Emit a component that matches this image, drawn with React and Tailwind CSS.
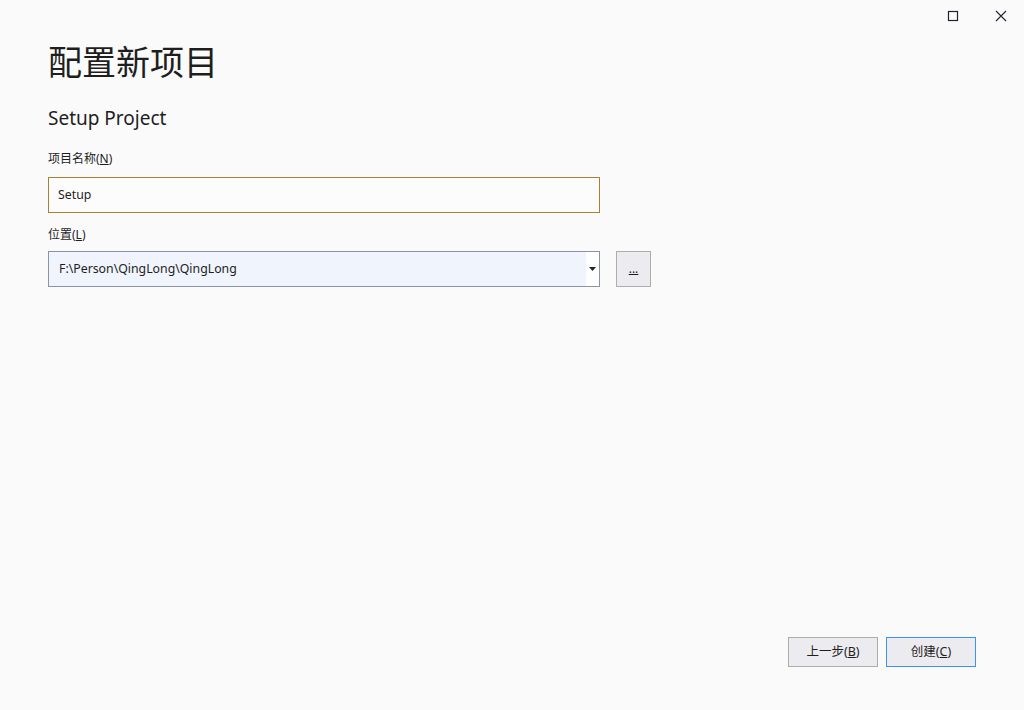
export default function App() {
  const font = { fontFamily: '"Noto Sans", "Noto Sans CJK SC", sans-serif' };
  return (
    <div className="w-[1024px] h-[710px] bg-[#fafafa] text-[#1e1e1e] flex flex-col relative overflow-hidden" style={font}>
      <div className="absolute top-[10px] right-[17px] flex items-center gap-[36px]">
        <svg width="12" height="12" viewBox="0 0 12 12"><rect x="1.5" y="1.5" width="9" height="9" fill="none" stroke="#1e2433" strokeWidth="1.2" /></svg>
        <svg width="12" height="12" viewBox="0 0 12 12"><path d="M1 1 L11 11 M11 1 L1 11" stroke="#1e2433" strokeWidth="1.1" /></svg>
      </div>
      <div className="pl-[48px] pt-[38px] flex flex-col">
        <h1 className="text-[34px] leading-[46px] font-normal" style={{ fontFamily: '"Noto Sans CJK SC", sans-serif' }}>配置新项目</h1>
        <h2 className="text-[19px] leading-[28px] mt-[20px]">Setup Project</h2>
        <label className="text-[12px] leading-[18px] mt-[18px]">项目名称(<span className="underline">N</span>)</label>
        <div className="mt-[9px] w-[552px] h-[36px] border border-[#a88033] bg-[#fcfcfc] flex items-center pl-[9px] text-[12.3px]">Setup</div>
        <label className="text-[12px] leading-[18px] mt-[13px]">位置(<span className="underline">L</span>)</label>
        <div className="mt-[7px] flex items-center gap-[16px]">
          <div className="w-[552px] h-[36px] border border-[#8c93a5] bg-[#f0f4fc] flex items-stretch">
            <div className="flex-1 flex items-center pl-[10px] text-[12.3px]">F:\Person\QingLong\QingLong</div>
            <div className="w-[13px] bg-white flex items-center justify-center">
              <svg width="7" height="5" viewBox="0 0 7 5"><path d="M0 0 H7 L3.5 4 Z" fill="#1e2433" /></svg>
            </div>
          </div>
          <div className="w-[35px] h-[36px] border border-[#adadad] bg-[#ececf0] flex items-center justify-center text-[12px] leading-none">
            <span className="underline">...</span>
          </div>
        </div>
      </div>
      <div className="mt-auto mb-[43px] mr-[48px] flex justify-end gap-[8px]">
        <button className="w-[90px] h-[30px] border border-[#adadad] bg-[#ececf0] text-[12.5px] flex items-center justify-center">上一步(<span className="underline">B</span>)</button>
        <button className="w-[90px] h-[30px] border border-[#3c94f0] bg-[#ececf0] text-[12.5px] flex items-center justify-center">创建(<span className="underline">C</span>)</button>
      </div>
    </div>
  );
}
